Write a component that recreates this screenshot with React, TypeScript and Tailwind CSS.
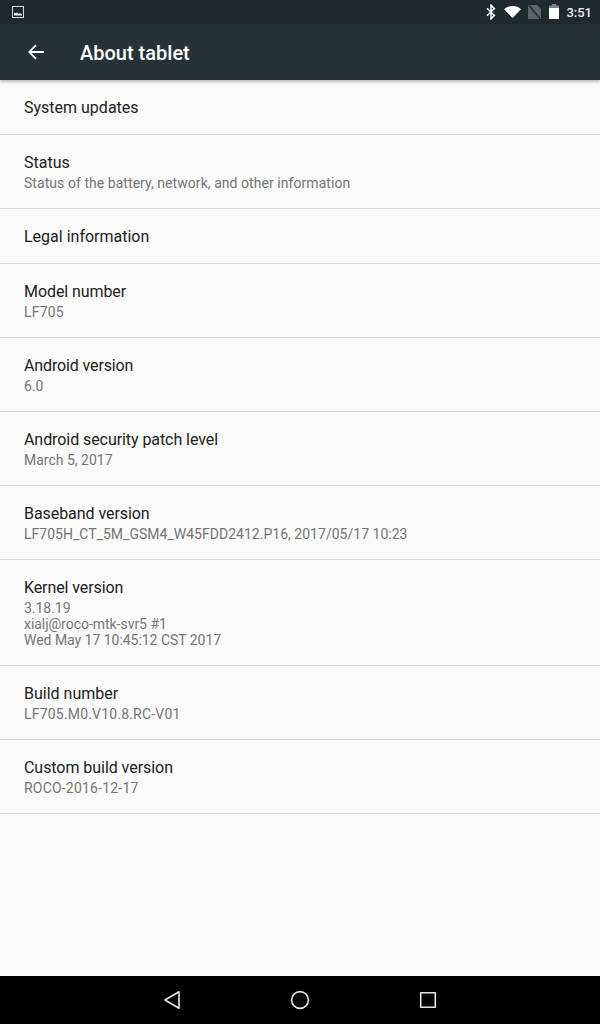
const rows = [
  { title: 'System updates' },
  { title: 'Status', summary: ['Status of the battery, network, and other information'], summaryClass: 'tracking-[0.055px]' },
  { title: 'Legal information' },
  { title: 'Model number', titleClass: 'tracking-[-0.08px]', summary: ['LF705'], summaryClass: 'tracking-[0.2px]' },
  { title: 'Android version', titleClass: 'tracking-[-0.13px]', summary: ['6.0'] },
  { title: 'Android security patch level', titleClass: 'tracking-[-0.07px]', summary: ['March 5, 2017'] },
  { title: 'Baseband version', titleClass: 'tracking-[-0.06px]', summary: ['LF705H_CT_5M_GSM4_W45FDD2412.P16, 2017/05/17 10:23'], summaryClass: 'tracking-[0.02px]' },
  {
    title: 'Kernel version',
    titleClass: 'tracking-[-0.1px]',
    summary: ['3.18.19', 'xialj@roco-mtk-svr5 #1', 'Wed May 17 10:45:12 CST 2017'],
    summaryClass: 'tracking-[-0.03px]',
  },
  { title: 'Build number', summary: ['LF705.M0.V10.8.RC-V01'], summaryClass: 'tracking-[0.19px]' },
  { title: 'Custom build version', titleClass: 'tracking-[-0.05px]', summary: ['ROCO-2016-12-17'], summaryClass: 'tracking-[0.2px]' },
];

function StatusBar() {
  return (
    <div className="h-6 shrink-0 bg-[#20292e] flex items-center justify-between pl-3 pr-2 text-white">
      <svg width="12" height="12" viewBox="0 0 12 12" fill="none">
        <rect x="0.5" y="0.5" width="11" height="11" stroke="#d5d8d9" strokeWidth="1" />
        <path d="M2 9.5V6.5l1.5 0.7L5 6.4l1.5 1.4 1.5-.6 2 1v1.3z" fill="#e8eaea" />
      </svg>
      <div className="flex items-center">
        {/* bluetooth */}
        <svg width="10" height="16" viewBox="0 0 10 16" fill="none" stroke="#fff" strokeWidth="1.5">
          <path d="M1 4.2l7.4 7.2L5 14.8V1.2l3.4 3.4L1 11.8" />
        </svg>
        {/* wifi */}
        <svg width="17" height="12" viewBox="0 0 17 12" className="ml-[8px]">
          <path d="M8.5 12L0 3.2C2.2 1.2 5.2 0 8.5 0S14.8 1.2 17 3.2z" fill="#fff" />
        </svg>
        {/* no sim */}
        <svg width="13" height="14" viewBox="0 0 13 14" className="ml-[7px]">
          <path d="M0 0h9l4 4v10H0z" fill="#5d6467" />
          <path d="M1 0.5l11 13" stroke="#20292e" strokeWidth="1.4" />
        </svg>
        {/* battery */}
        <svg width="10" height="15" viewBox="0 0 10 15" className="ml-[8px] -mt-[1px]">
          <path d="M3 0h4v1.5h3V15H0V1.5h3z" fill="#7c8285" />
          <rect x="0" y="4" width="10" height="11" fill="#fff" />
        </svg>
        <span className="ml-[7px] text-[13px] leading-none font-medium text-[#eceeee]">3:51</span>
      </div>
    </div>
  );
}

function AppBar() {
  return (
    <div className="h-14 shrink-0 bg-[#263238] flex items-center pl-[28px] shadow-[0_2px_3px_rgba(0,0,0,0.25)] relative">
      <svg width="16" height="16" viewBox="0 0 16 16" fill="none" stroke="#fff" strokeWidth="1.8" className="-mt-[1px]">
        <path d="M16 8H1.5M8 1.2L1.2 8L8 14.8" />
      </svg>
      <span className="ml-[36px] text-[20px] font-medium text-white leading-none mt-[1px]">About tablet</span>
    </div>
  );
}

function Row({ title, titleClass, summary, summaryClass }: { title: string; titleClass?: string; summary?: string[]; summaryClass?: string }) {
  const height = !summary ? 'h-[55px]' : summary.length > 1 ? 'h-[106px]' : 'h-[74px]';
  return (
    <div className={`${height} border-b border-[#dcdcdc] px-6 pt-4`}>
      <div className={`text-[16px] leading-[24px] text-[#212121] ${titleClass ?? ''}`}>{title}</div>
      {summary && (
        <div className={`text-[14px] leading-[16px] text-[#757575] whitespace-nowrap ${summaryClass ?? ''}`}>
          {summary.map((line) => (
            <div key={line}>{line}</div>
          ))}
        </div>
      )}
    </div>
  );
}

function NavBar() {
  return (
    <div className="h-12 shrink-0 bg-black flex items-center justify-center gap-[96px]">
      <svg width="32" height="20" viewBox="0 0 32 20" fill="none" stroke="#e6e6e6" strokeWidth="1.6" strokeLinejoin="round">
        <path d="M23 1.8V18.2L9 10z" />
      </svg>
      <svg width="32" height="20" viewBox="0 0 32 20" fill="none" stroke="#e6e6e6" strokeWidth="1.6">
        <circle cx="16" cy="10" r="8.4" />
      </svg>
      <svg width="32" height="20" viewBox="0 0 32 20" fill="none" stroke="#e6e6e6" strokeWidth="1.6" strokeLinejoin="round">
        <rect x="8.7" y="2.7" width="14.6" height="14.6" />
      </svg>
    </div>
  );
}

export default function App() {
  return (
    <div className="h-[1024px] w-[600px] flex flex-col bg-[#fafafa] overflow-hidden font-['Roboto',sans-serif]">
      <StatusBar />
      <AppBar />
      <div className="flex-1 flex flex-col">
        {rows.map((row) => (
          <Row key={row.title} {...row} />
        ))}
      </div>
      <NavBar />
    </div>
  );
}
